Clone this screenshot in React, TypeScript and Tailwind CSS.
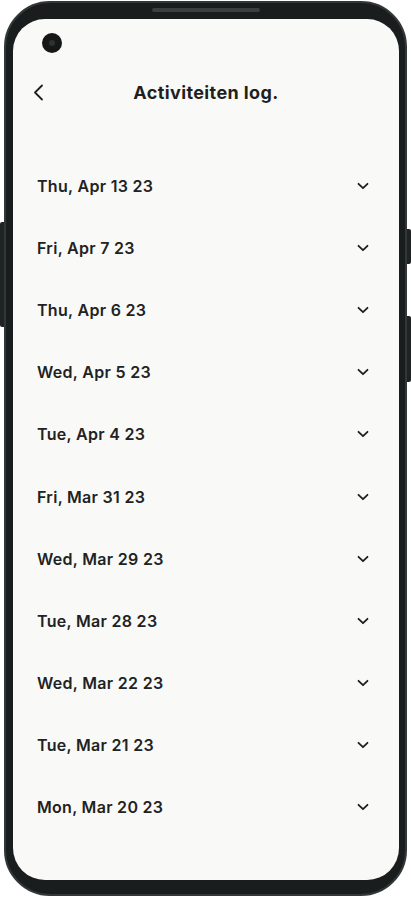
import { useState } from "react"

const days = [
  "Thu, Apr 13 23",
  "Fri, Apr 7 23",
  "Thu, Apr 6 23",
  "Wed, Apr 5 23",
  "Tue, Apr 4 23",
  "Fri, Mar 31 23",
  "Wed, Mar 29 23",
  "Tue, Mar 28 23",
  "Wed, Mar 22 23",
  "Tue, Mar 21 23",
  "Mon, Mar 20 23",
]

function Chevron({ open }: { open: boolean }) {
  return (
    <svg
      width="12"
      height="8"
      viewBox="0 0 12 8"
      fill="none"
      className={open ? "rotate-180" : ""}
    >
      <path d="M1.5 1.8 6 6.2l4.5-4.4" stroke="#1f1f1f" strokeWidth="1.8" strokeLinecap="round" strokeLinejoin="round" />
    </svg>
  )
}

export default function App() {
  const [open, setOpen] = useState<number | null>(null)

  return (
    <div className="w-[411px] h-[900px] bg-white overflow-hidden font-['Inter','Liberation_Sans',sans-serif]">
      <div className="relative ml-[4px] mt-[1px] w-[403px] h-[895px] rounded-[46px] bg-[#1a1d1d] border-2 border-[#323737] pt-[16px] pl-[7px] pr-[6px] pb-[14px]">
        {/* side buttons + speaker sit on the frame */}
        <div className="absolute left-[-6px] top-[219px] w-[4px] h-[105px] rounded-l-[2px] bg-[#1f2323]" />
        <div className="absolute right-[-6px] top-[226px] w-[4px] h-[35px] rounded-r-[2px] bg-[#1f2323]" />
        <div className="absolute right-[-6px] top-[313px] w-[4px] h-[66px] rounded-r-[2px] bg-[#1f2323]" />
        <div className="absolute left-[146px] top-[5px] w-[108px] h-[4px] rounded-full bg-[#3a3f3f]" />

        <div className="h-full rounded-[32px] bg-[#f9faf8] overflow-hidden flex flex-col">
          <div className="pt-[14px] pl-[29px]">
            <div className="w-[20px] h-[20px] rounded-full bg-[#161818] flex items-center justify-center">
              <div className="w-[6px] h-[6px] rounded-full bg-[#2c3131]" />
            </div>
          </div>

          <div className="mt-[21px] h-[36px] px-[20px] grid grid-cols-[40px_1fr_40px] items-center">
            <button className="h-[36px] flex items-center">
              <svg width="11" height="17" viewBox="0 0 11 17" fill="none">
                <path d="M9 1.5 2 8.5l7 7" stroke="#1f1f1f" strokeWidth="1.8" strokeLinecap="round" strokeLinejoin="round" />
              </svg>
            </button>
            <h1 className="text-center text-[18px] font-bold text-[#1f1f1f] tracking-[0.4px]">
              Activiteiten log.
            </h1>
            <div />
          </div>

          <ul className="mt-[45px] flex flex-col">
            {days.map((d, i) => (
              <li key={d}>
                <button
                  onClick={() => setOpen(open === i ? null : i)}
                  className="w-full h-[62.1px] pl-[24px] pr-[30px] flex items-center justify-between"
                >
                  <span className="text-[16px] font-semibold text-[#222222] tracking-[0.3px]">{d}</span>
                  <Chevron open={open === i} />
                </button>
              </li>
            ))}
          </ul>
        </div>
      </div>
    </div>
  )
}
